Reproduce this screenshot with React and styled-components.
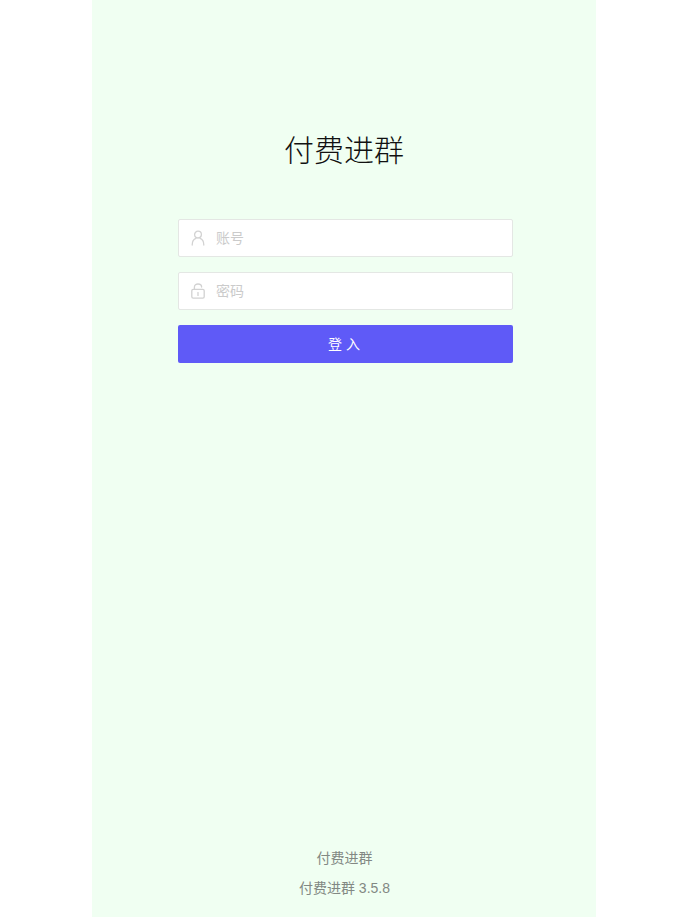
import React from 'react';
import styled, { createGlobalStyle } from 'styled-components';

const GlobalStyle = createGlobalStyle`
  html, body {
    margin: 0;
    padding: 0;
    height: 100%;
    background: #fff;
  }
  body {
    font-family: "Liberation Sans", "Noto Sans CJK SC", sans-serif;
  }
  * {
    box-sizing: border-box;
  }
`;

const Page = styled.div`
  display: flex;
  justify-content: center;
  height: 917px;
  padding-left: 1px;
  overflow: hidden;
`;

const Panel = styled.main`
  width: 504px;
  height: 100%;
  background: #f0fff2;
  display: flex;
  flex-direction: column;
  align-items: center;
  padding: 127px 0 0 3px;
`;

const Title = styled.h1`
  margin: 0 3px 50px 0;
  height: 42px;
  font-size: 30px;
  line-height: 42px;
  font-weight: 300;
  color: #111;
  font-family: "Noto Sans CJK SC", sans-serif;
`;

const Form = styled.form`
  width: 335px;
  display: flex;
  flex-direction: column;
  gap: 15px;
`;

const Field = styled.label`
  height: 38px;
  display: flex;
  align-items: center;
  gap: 11px;
  padding-left: 12px;
  background: #fff;
  border: 1px solid #e4e7e4;
  border-radius: 2px;
  color: #d2d2d2;
`;

const Input = styled.input`
  flex: 1;
  min-width: 0;
  border: 0;
  outline: 0;
  padding: 0 0 2px;
  background: transparent;
  font-size: 14px;
  font-family: "Noto Sans CJK SC", sans-serif;
  color: #333;
  &::placeholder {
    color: #cbcbcb;
    opacity: 1;
  }
`;

const Submit = styled.button`
  height: 38px;
  border: 0;
  border-radius: 2px;
  padding: 0 0 2px 1px;
  background: #5f5af7;
  color: #fff;
  font-size: 14px;
  letter-spacing: 4px;
  font-family: "Noto Sans CJK SC", sans-serif;
`;

const Footer = styled.footer`
  margin: auto 2px 0 0;
  padding-bottom: 19px;
  display: flex;
  flex-direction: column;
  gap: 10px;
  align-items: center;
  color: #828883;
  font-size: 14px;
  line-height: 20px;
`;

const UserIcon = () => (
  <svg width="14" height="16" viewBox="0 0 14 16" fill="none" stroke="currentColor" strokeWidth="1.3">
    <circle cx="7" cy="4.6" r="3.4" />
    <path d="M1.2 15c0-3.6 1.6-5.8 3.8-6.6M12.8 15c0-3.6-1.6-5.8-3.8-6.6" strokeLinecap="round" />
  </svg>
);

const LockIcon = () => (
  <svg width="14" height="16" viewBox="0 0 14 16" fill="none" stroke="currentColor" strokeWidth="1.3">
    <rect x="0.8" y="6.4" width="12.4" height="8.8" rx="1.4" />
    <path d="M3.4 6.4V4.2C3.4 2.2 5 1 7 1s3.6 1.2 3.6 3" strokeLinecap="round" />
    <path d="M7 9.6v2.8" strokeLinecap="round" />
  </svg>
);

export default function App() {
  return (
    <>
      <GlobalStyle />
      <Page>
        <Panel>
          <Title>付费进群</Title>
          <Form onSubmit={(e) => e.preventDefault()}>
            <Field>
              <UserIcon />
              <Input type="text" placeholder="账号" />
            </Field>
            <Field>
              <LockIcon />
              <Input type="password" placeholder="密码" />
            </Field>
            <Submit type="submit">登入</Submit>
          </Form>
          <Footer>
            <span>付费进群</span>
            <span>付费进群 3.5.8</span>
          </Footer>
        </Panel>
      </Page>
    </>
  );
}
